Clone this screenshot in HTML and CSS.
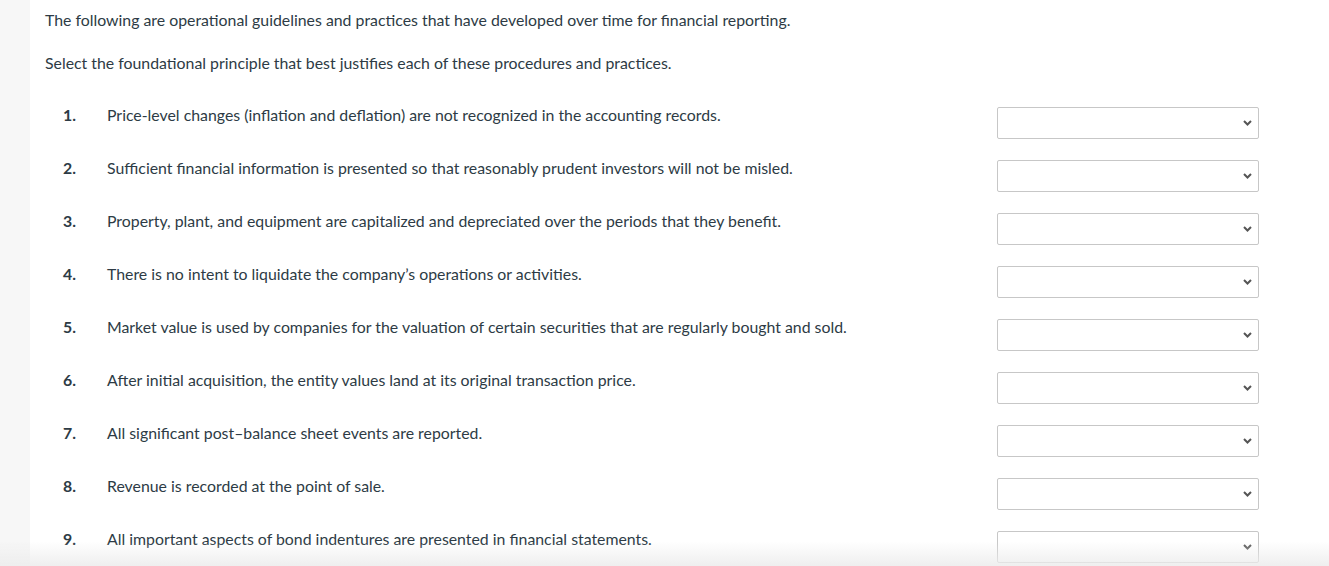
FILE: index.html
```html
<!DOCTYPE html>
<html lang="en">
<head>
<meta charset="utf-8">
<title>Principles</title>
<link rel="stylesheet" href="styles.css">
</head>
<body>
<div class="page">
  <div class="side"></div>
  <main class="main">
    <p class="intro">The following are operational guidelines and practices that have developed over time for financial reporting.</p>
    <p class="intro">Select the foundational principle that best justifies each of these procedures and practices.</p>
    <div class="rows">
      <div class="row"><span class="num">1.</span><span class="txt">Price-level changes (inflation and deflation) are not recognized in the accounting records.</span><div class="sel"><svg viewBox="0 0 9 6" width="9" height="6"><path d="M1 1 L4.5 4.5 L8 1" fill="none" stroke="#555" stroke-width="2"/></svg></div></div>
      <div class="row"><span class="num">2.</span><span class="txt">Sufficient financial information is presented so that reasonably prudent investors will not be misled.</span><div class="sel"><svg viewBox="0 0 9 6" width="9" height="6"><path d="M1 1 L4.5 4.5 L8 1" fill="none" stroke="#555" stroke-width="2"/></svg></div></div>
      <div class="row"><span class="num">3.</span><span class="txt">Property, plant, and equipment are capitalized and depreciated over the periods that they benefit.</span><div class="sel"><svg viewBox="0 0 9 6" width="9" height="6"><path d="M1 1 L4.5 4.5 L8 1" fill="none" stroke="#555" stroke-width="2"/></svg></div></div>
      <div class="row"><span class="num">4.</span><span class="txt">There is no intent to liquidate the company’s operations or activities.</span><div class="sel"><svg viewBox="0 0 9 6" width="9" height="6"><path d="M1 1 L4.5 4.5 L8 1" fill="none" stroke="#555" stroke-width="2"/></svg></div></div>
      <div class="row"><span class="num">5.</span><span class="txt">Market value is used by companies for the valuation of certain securities that are regularly bought and sold.</span><div class="sel"><svg viewBox="0 0 9 6" width="9" height="6"><path d="M1 1 L4.5 4.5 L8 1" fill="none" stroke="#555" stroke-width="2"/></svg></div></div>
      <div class="row"><span class="num">6.</span><span class="txt">After initial acquisition, the entity values land at its original transaction price.</span><div class="sel"><svg viewBox="0 0 9 6" width="9" height="6"><path d="M1 1 L4.5 4.5 L8 1" fill="none" stroke="#555" stroke-width="2"/></svg></div></div>
      <div class="row"><span class="num">7.</span><span class="txt">All significant post–balance sheet events are reported.</span><div class="sel"><svg viewBox="0 0 9 6" width="9" height="6"><path d="M1 1 L4.5 4.5 L8 1" fill="none" stroke="#555" stroke-width="2"/></svg></div></div>
      <div class="row"><span class="num">8.</span><span class="txt">Revenue is recorded at the point of sale.</span><div class="sel"><svg viewBox="0 0 9 6" width="9" height="6"><path d="M1 1 L4.5 4.5 L8 1" fill="none" stroke="#555" stroke-width="2"/></svg></div></div>
      <div class="row"><span class="num">9.</span><span class="txt">All important aspects of bond indentures are presented in financial statements.</span><div class="sel"><svg viewBox="0 0 9 6" width="9" height="6"><path d="M1 1 L4.5 4.5 L8 1" fill="none" stroke="#555" stroke-width="2"/></svg></div></div>
    </div>
  </main>
</div>
<div class="fade"></div>
</body>
</html>
```

FILE: styles.css
```css
html, body {
  margin: 0;
  padding: 0;
  background: #ffffff;
  height: 100%;
  overflow: hidden;
}
body {
  font-family: Lato, "Liberation Sans", sans-serif;
  font-size: 15.85px;
  color: #2d3b45;
}
.page {
  display: flex;
  min-height: 100%;
}
.side {
  width: 30px;
  flex: none;
  background: #f7f7f7;
}
.main {
  flex: 1;
  padding: 10px 0 0 15px;
}
.intro {
  margin: 0 0 23px 0;
  line-height: 20px;
}
.rows {
  margin-top: 24px;
}
.row {
  display: flex;
  align-items: flex-start;
  height: 53px;
}
.num {
  width: 44px;
  padding-left: 18px;
  font-weight: 700;
  line-height: 20px;
  margin-top: 8px;
}
.txt {
  width: 890px;
  line-height: 20px;
  margin-top: 8px;
}
.sel {
  margin-top: 10px;
  width: 254px;
  height: 30px;
  border: 1px solid #c7c7c7;
  border-radius: 2px;
  background: #fff;
  display: flex;
  align-items: center;
  justify-content: flex-end;
  padding-right: 6px;
  box-sizing: content-box;
}
.sel svg {
  display: block;
}
.fade {
  position: fixed;
  left: 0;
  right: 0;
  bottom: 0;
  height: 24px;
  background: linear-gradient(to bottom, rgba(235,235,235,0), rgba(235,235,235,0.85));
  pointer-events: none;
}
```
